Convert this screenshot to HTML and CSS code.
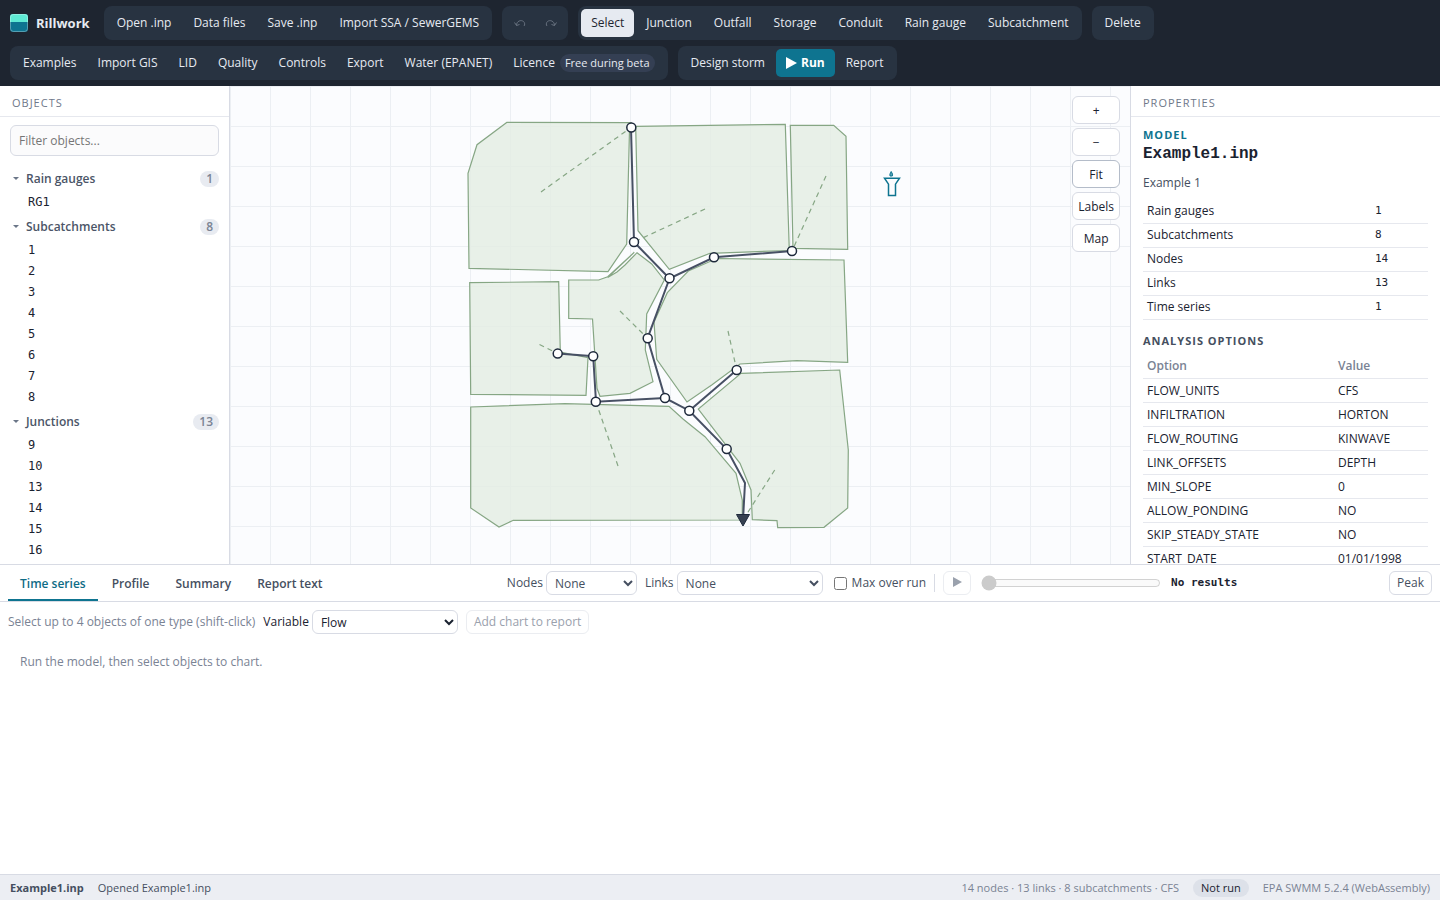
FILE: index.html
```html
<!DOCTYPE html>
<html lang="en">
<head>
<meta charset="utf-8">
<title>Rillwork</title>
<link rel="stylesheet" href="styles.css">
</head>
<body>
<div class="app">
  <header class="toolbar">
    <div class="brand">
      <svg class="brand-mark" viewBox="0 0 18 18" aria-hidden="true">
        <rect width="18" height="18" rx="3" fill="#0e7490"/>
        <path d="M0 8V3a3 3 0 0 1 3-3h12a3 3 0 0 1 3 3v5z" fill="#5eead4"/>
        <rect x=".5" y=".5" width="17" height="17" rx="3" fill="none" stroke="#fff" stroke-opacity=".3"/>
      </svg>
      <span>Rillwork</span>
    </div>
    <div class="group">
      <button class="tool">Open .inp</button>
      <button class="tool">Data files</button>
      <button class="tool">Save .inp</button>
      <button class="tool">Import SSA / SewerGEMS</button>
    </div>
    <div class="group">
      <button class="tool icon" disabled aria-label="Undo"><svg viewBox="0 0 12 8" width="12" height="8"><path d="M.5 3.500L2.500 6.500 5.500 5.500M2.500 6.500C2.500 2 7 .5 9.500 2.500c1.500 1.300 1.500 3.500 .5 4.500" fill="none" stroke="currentColor"/></svg></button>
      <button class="tool icon" disabled aria-label="Redo"><svg viewBox="0 0 12 8" width="12" height="8"><path d="M11.500 3.500L9.500 6.500 6.500 5.500M9.500 6.500C9.500 2 5 .5 2.500 2.500c-1.500 1.300-1.500 3.500-.5 4.500" fill="none" stroke="currentColor"/></svg></button>
    </div>
    <div class="group">
      <button class="tool active">Select</button>
      <button class="tool">Junction</button>
      <button class="tool">Outfall</button>
      <button class="tool">Storage</button>
      <button class="tool">Conduit</button>
      <button class="tool">Rain gauge</button>
      <button class="tool">Subcatchment</button>
    </div>
    <div class="group"><button class="tool">Delete</button></div>
    <div class="group compact">
      <button class="tool">Examples</button>
      <button class="tool">Import GIS</button>
      <button class="tool">LID</button>
      <button class="tool">Quality</button>
      <button class="tool">Controls</button>
      <button class="tool">Export</button>
      <button class="tool">Water (EPANET)</button>
      <button class="tool">Licence <span class="pill">Free during beta</span></button>
    </div>
    <div class="group compact">
      <button class="tool">Design storm</button>
      <button class="tool run"><svg viewBox="0 0 11 12" width="11" height="12"><path d="M0 0l11 6-11 6z" fill="currentColor"/></svg>Run</button>
      <button class="tool">Report</button>
    </div>
  </header>

  <main class="workspace">
    <aside class="objects">
      <h2 class="panel-title">Objects</h2>
      <input class="filter" type="text" placeholder="Filter objects..." aria-label="Filter objects">
      <section>
        <button class="tree-head"><span class="caret"></span>Rain gauges<span class="count">1</span></button>
        <ul class="tree"><li>RG1</li></ul>
      </section>
      <section>
        <button class="tree-head"><span class="caret"></span>Subcatchments<span class="count">8</span></button>
        <ul class="tree"><li>1</li><li>2</li><li>3</li><li>4</li><li>5</li><li>6</li><li>7</li><li>8</li></ul>
      </section>
      <section>
        <button class="tree-head"><span class="caret"></span>Junctions<span class="count">13</span></button>
        <ul class="tree"><li>9</li><li>10</li><li>13</li><li>14</li><li>15</li><li>16</li></ul>
      </section>
    </aside>

    <div class="canvas">
      <svg class="map" viewBox="230 86 900 478" role="img" aria-label="Drainage network map">
        <g class="catchments">
          <path d="M507 122.300L477 144.700 468 173.300 469 268.300 608 271.700 626.700 244 629.500 130 631 122.700z"/>
          <path d="M635.700 126.300L785.300 124.300 789.300 250.500 710 253.300 669.300 269.300 638 230.700z"/>
          <path d="M790.300 125.300H833.700L846 136.300 847.700 249.300 793 248.300z"/>
          <path d="M688.300 271L716.700 258.500 844 260 847.700 362.300 796.700 360.700 740 364 711.700 385 687 402 656.700 359.300 654 322 667.300 292.700z"/>
          <path d="M637 252.700L651.700 264 664.300 280 646.700 314 645.300 350 653 381.700 630 393.300 600 396.300 597 388.300 592.500 319 568.700 318.300V280H598.700L607.700 276.700 634.300 252.300 607.700 277.500 617 272 625 265z"/>
          <path d="M469.700 282.700L558.700 281.700 560.300 352 588 357.700 586 395.300 470.700 394.300z"/>
          <path d="M470.700 407L565 403.700 669 406.300 683.300 419.300 705 436.700 736 473.300 742.300 500V520L513.300 520.300 499 527 470.700 508z"/>
          <path d="M741 373.300L839.700 370 848.300 450 847.700 508 824 527.300 777.700 527.700 777 520.700 752.300 519.700 751 490 740 463.300 698.300 409z"/>
        </g>
        <path class="outlets" d="M541 192L631 127.500M705 209L634 242M826 176L792 251M620 311L647.500 338.300M539.500 344.500L557.700 353.600M728 331L736.700 370M618 466L596 402M774.700 470L743 520"/>
        <path class="conduits" d="M631 127.500L634 242 669.500 278.500 714 257.300 792 251M669.500 278.500L647.500 338.300 665 398 689.300 410.700 726.700 449 745 483 743 520M736.700 370L689.300 410.700M557.700 353.600L593.200 356.300 596 401.700 665 398"/>
        <g class="nodes">
          <circle cx="631.300" cy="127.500" r="4.500"/><circle cx="634" cy="242" r="4.500"/><circle cx="669.500" cy="278.300" r="4.500"/>
          <circle cx="714" cy="257.300" r="4.500"/><circle cx="792" cy="251" r="4.500"/><circle cx="647.700" cy="338.300" r="4.500"/>
          <circle cx="557.700" cy="353.600" r="4.500"/><circle cx="593.200" cy="356.300" r="4.500"/><circle cx="595.800" cy="401.700" r="4.500"/>
          <circle cx="665" cy="398" r="4.500"/><circle cx="689.300" cy="410.700" r="4.500"/><circle cx="736.700" cy="370" r="4.500"/>
          <circle cx="726.700" cy="449" r="4.500"/>
        </g>
        <path d="M736.500 514.500H749.500L743 526z" fill="#374151" stroke="#1e293b"/>
        <g fill="none" stroke="#0e7490" stroke-width="1.500">
          <path d="M884.500 178.200H899.500L895.500 184.200V195.500H888.500V184.200z"/>
          <path d="M891.200 171.500Q893.300 174.500 892.300 176H890Q889.200 174.500 891.200 171.500z" fill="#5aa7b8" stroke-width="1"/>
        </g>
      </svg>
      <div class="map-tools">
        <button class="btn">+</button>
        <button class="btn">−</button>
        <button class="btn focus">Fit</button>
        <button class="btn">Labels</button>
        <button class="btn">Map</button>
      </div>
    </div>

    <aside class="properties">
      <h2 class="panel-title">Properties</h2>
      <div class="props-body">
        <div class="eyebrow">Model</div>
        <h3 class="model-name">Example1.inp</h3>
        <p class="model-note">Example 1</p>
        <table class="grid counts">
          <tr><th scope="row">Rain gauges</th><td>1</td></tr>
          <tr><th scope="row">Subcatchments</th><td>8</td></tr>
          <tr><th scope="row">Nodes</th><td>14</td></tr>
          <tr><th scope="row">Links</th><td>13</td></tr>
          <tr><th scope="row">Time series</th><td>1</td></tr>
        </table>
        <h4 class="section-title">Analysis options</h4>
        <table class="grid options">
          <thead><tr><th scope="col">Option</th><th scope="col">Value</th></tr></thead>
          <tbody>
            <tr><td>FLOW_UNITS</td><td>CFS</td></tr>
            <tr><td>INFILTRATION</td><td>HORTON</td></tr>
            <tr><td>FLOW_ROUTING</td><td>KINWAVE</td></tr>
            <tr><td>LINK_OFFSETS</td><td>DEPTH</td></tr>
            <tr><td>MIN_SLOPE</td><td>0</td></tr>
            <tr><td>ALLOW_PONDING</td><td>NO</td></tr>
            <tr><td>SKIP_STEADY_STATE</td><td>NO</td></tr>
            <tr><td>START_DATE</td><td>01/01/1998</td></tr>
          </tbody>
        </table>
      </div>
    </aside>
  </main>

  <section class="results">
    <div class="tabbar">
      <div class="tabs" role="tablist">
        <button class="tab current" role="tab" aria-selected="true">Time series</button>
        <button class="tab" role="tab">Profile</button>
        <button class="tab" role="tab">Summary</button>
        <button class="tab" role="tab">Report text</button>
      </div>
      <div class="controls">
        <div class="field"><label for="nodes">Nodes</label><select id="nodes" class="select narrow"><option>None</option></select></div>
        <div class="field"><label for="links">Links</label><select id="links" class="select"><option>None</option></select></div>
        <label class="check"><input type="checkbox">Max over run</label>
        <span class="divider"></span>
        <button class="btn play" disabled aria-label="Play"><svg viewBox="0 0 9 10" width="9" height="10"><path d="M0 0l9 5-9 5z" fill="currentColor"/></svg></button>
        <input class="time" type="range" value="0" disabled aria-label="Time step">
        <output class="clock">No results</output>
        <button class="btn">Peak</button>
      </div>
    </div>
    <div class="chartbar">
      <span class="hint">Select up to 4 objects of one type (shift-click)</span>
      <div class="field dark"><label for="variable">Variable</label><select id="variable" class="select"><option>Flow</option></select></div>
      <button class="btn" disabled>Add chart to report</button>
    </div>
    <p class="empty">Run the model, then select objects to chart.</p>
  </section>

  <footer class="status">
    <strong>Example1.inp</strong>
    <span>Opened Example1.inp</span>
    <span class="summary">14 nodes · 13 links · 8 subcatchments · CFS</span>
    <span class="state">Not run</span>
    <span class="muted">EPA SWMM 5.2.4 (WebAssembly)</span>
  </footer>
</div>
</body>
</html>
```
FILE: styles.css
```css
* { box-sizing: border-box; }
body {
  margin: 0;
  font: 12px/18px "Open Sans", "Noto Sans", sans-serif;
  color: #1a2230;
  background: #fff;
}
button, input, select { font: inherit; color: inherit; }
h2, h3, h4, p, ul { margin: 0; padding: 0; }

.app { display: flex; flex-direction: column; height: 100vh; }

.toolbar {
  display: flex;
  flex-wrap: wrap;
  gap: 6px 10px;
  padding: 6px 10px;
  background: #1e2530;
  color: #e6eaf1;
}
.brand {
  display: flex;
  align-items: center;
  gap: 8px;
  margin-right: 4px;
  font-size: 13px;
  font-weight: 700;
}
.brand-mark { width: 18px; height: 18px; }
.group {
  display: flex;
  gap: 2px;
  padding: 3px;
  border-radius: 8px;
  background: #283341;
}
.group.compact { gap: 1px; }
.tool {
  display: flex;
  align-items: center;
  gap: 4px;
  height: 28px;
  padding: 0 10px;
  border: 0;
  border-radius: 5px;
  background: none;
}
.tool.icon { width: 29px; padding: 0; justify-content: center; }
.tool:disabled { color: #67717f; }
.tool.active { background: #e6eaf1; color: #1e2530; }
.tool.run { background: #0e7490; color: #fff; font-weight: 700; }
.pill {
  padding: 0 5px;
  margin-left: 1px;
  border-radius: 9px;
  background: #343f53;
  font-size: 11px;
}

.workspace {
  flex: 1;
  min-height: 0;
  display: grid;
  grid-template-columns: 230px minmax(0, 1fr) 310px;
  grid-template-rows: minmax(0, 1fr);
}
.objects, .properties { overflow: hidden; }
.objects { border-right: 1px solid #d8dbe4; }
.properties { border-left: 1px solid #d8dbe4; }
.panel-title {
  padding: 8px 12px 4px;
  border-bottom: 1px solid #e6e8ee;
  font-size: 11px;
  line-height: 18px;
  font-weight: 500;
  letter-spacing: 1px;
  text-transform: uppercase;
  color: #6f788a;
}
.filter {
  display: block;
  width: calc(100% - 20px);
  height: 31px;
  margin: 8px 10px 9px;
  padding: 0 8px;
  border: 1px solid #d8dbe4;
  border-radius: 6px;
  background: #fbfbfc;
}
.tree-head {
  display: flex;
  align-items: center;
  width: 100%;
  height: 27px;
  padding: 0 10px 0 13px;
  border: 0;
  background: none;
  font-weight: 600;
  color: #4b5567;
}
.caret {
  margin-right: 7px;
  border: 3px solid transparent;
  border-top-color: #6b7688;
  border-bottom: 0;
}
.count {
  margin-left: auto;
  padding: 0 6px;
  border-radius: 8px;
  background: #e8ebf1;
  line-height: 16px;
  color: #7a8394;
}
.tree { list-style: none; font: 12px/21px "DejaVu Sans Mono", monospace; }
.tree li { padding-left: 28px; }

.canvas {
  position: relative;
  overflow: hidden;
  background:
    linear-gradient(#eceff3 1px, transparent 1px) 0 0 / 40px 40px,
    linear-gradient(90deg, #eceff3 1px, transparent 1px) 0 0 / 40px 40px,
    #fbfcfe;
}
.map { display: block; width: 100%; height: 100%; }
.catchments { fill: #e3ece2; fill-opacity: .8; stroke: #86a684; stroke-width: 1.200; }
.outlets { fill: none; stroke: #86a684; stroke-width: 1.200; stroke-dasharray: 5 4; }
.conduits { fill: none; stroke: #475064; stroke-width: 2; }
.nodes { fill: #fff; stroke: #1e293b; stroke-width: 1.500; }
.map-tools {
  position: absolute;
  top: 10px;
  right: 10px;
  display: flex;
  flex-direction: column;
  gap: 4px;
}
.btn {
  height: 28px;
  padding: 1px 6px 0;
  border: 1px solid #d8dbe4;
  border-radius: 6px;
  background: #fff;
}
.map-tools .btn { padding: 1px 5px 0; }
.btn.focus { border-color: #b4bcc9; }
.btn:disabled { color: #9aa1ad; border-color: #ebedf1; }

.props-body { padding: 9px 12px; }
.eyebrow {
  font-size: 11px;
  font-weight: 700;
  letter-spacing: 1px;
  text-transform: uppercase;
  color: #0e7490;
}
.model-name { font: 700 16px/20px "Liberation Mono", monospace; }
.model-note { margin: 10px 0 7px; color: #454f60; }
.grid { width: 100%; border-collapse: collapse; table-layout: fixed; }
.grid th, .grid td {
  height: 24px;
  padding: 0 4px;
  border-bottom: 1px solid #e6e8ee;
  text-align: left;
  font-weight: 400;
}
.counts th { width: 80%; }
.counts td { font-family: "DejaVu Sans Mono", monospace; font-size: 11px; }
.grid.options th { width: 33%; color: #7a8394; font-weight: 600; }
.grid.options th:first-child { width: 67%; }
.section-title {
  margin: 12px 0 5px;
  font-size: 11px;
  font-weight: 700;
  letter-spacing: 1px;
  text-transform: uppercase;
  color: #454f60;
}

.results { flex: 0 0 310px; border-top: 1px solid #d8dbe4; }
.tabbar {
  display: flex;
  justify-content: space-between;
  height: 37px;
  padding: 0 8px;
  border-bottom: 1px solid #d8dbe4;
}
.tabs { display: flex; gap: 2px; }
.tab {
  padding: 3px 12px 0;
  border: 0;
  border-bottom: 2px solid transparent;
  background: none;
  font-weight: 600;
  color: #454f60;
}
.tab.current { border-color: #0e7490; color: #0e6c86; }
.controls { display: flex; align-items: center; gap: 8px; color: #454f60; }
.field { display: flex; align-items: center; gap: 3px; }
.dark { color: #1a2230; }
.select {
  width: 146px;
  height: 24px;
  padding: 0 4px;
  border: 1px solid #d8dbe4;
  border-radius: 6px;
  background: #fff;
}
.select.narrow { width: 91px; }
.check { display: flex; align-items: center; gap: 5px; margin-left: 3px; }
.check input { width: 13px; height: 13px; margin: 0; }
.divider { width: 1px; height: 18px; background: #d8dbe4; }
.controls .btn, .chartbar .btn { height: 24px; padding: 0 7px; }
.controls .play { width: 28px; }
.time { width: 180px; margin: 0 2px; }
.clock { min-width: 210px; font: 700 11px/18px "DejaVu Sans Mono", monospace; color: #1a2230; }
.chartbar { display: flex; align-items: center; gap: 8px; padding: 8px; }
.hint, .muted, .summary { color: #7a8394; }
.empty { padding: 11px 20px; color: #7a8394; }

.status {
  display: flex;
  align-items: center;
  gap: 14px;
  height: 26px;
  padding: 0 10px;
  border-top: 1px solid #d8dbe4;
  background: #eceef3;
  font-size: 11px;
  color: #454f60;
}
.summary { margin-left: auto; }
.state { padding: 0 8px; border-radius: 9px; background: #dde1e9; color: #1a2230; }
```
